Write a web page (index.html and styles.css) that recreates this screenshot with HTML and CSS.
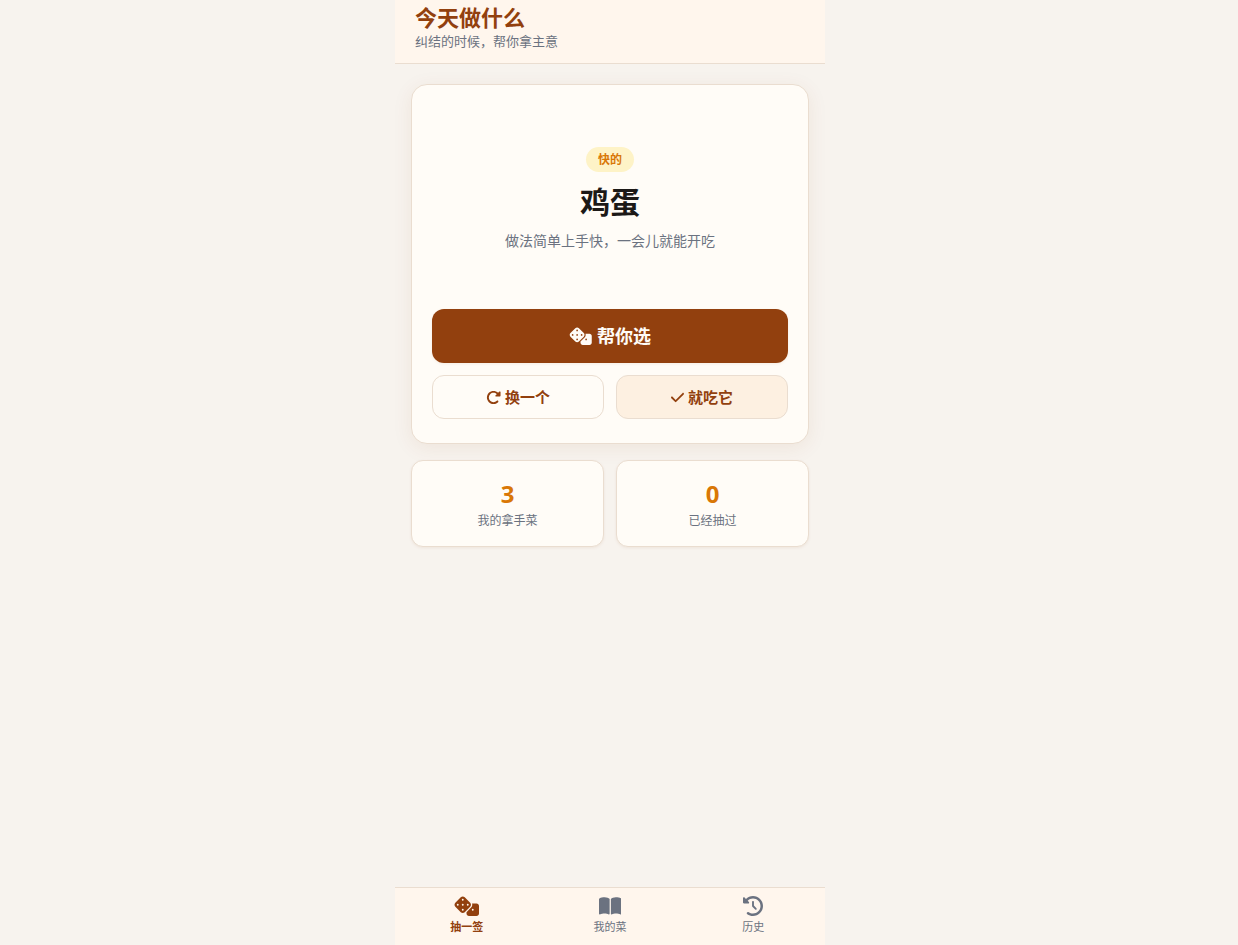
FILE: index.html
```html
<!DOCTYPE html>
<html lang="zh-CN">
<head>
<meta charset="utf-8">
<title>今天做什么</title>
<link rel="stylesheet" href="styles.css">
</head>
<body>
<svg class="sprite" aria-hidden="true">
  <symbol id="dice" viewBox="0 0 640 512"><path d="M274.9 34.3c-28.1-28.1-73.7-28.1-101.8 0L34.3 173.1c-28.1 28.1-28.1 73.7 0 101.8L173.1 413.7c28.1 28.1 73.7 28.1 101.8 0L413.7 274.9c28.1-28.1 28.1-73.7 0-101.8L274.9 34.3zM200 224a24 24 0 1 1 48 0 24 24 0 1 1 -48 0zM96 200a24 24 0 1 1 0 48 24 24 0 1 1 0-48zM224 376a24 24 0 1 1 0-48 24 24 0 1 1 0 48zM352 200a24 24 0 1 1 0 48 24 24 0 1 1 0-48zM224 120a24 24 0 1 1 0-48 24 24 0 1 1 0 48zm96 328c0 35.3 28.7 64 64 64H576c35.3 0 64-28.7 64-64V256c0-35.3-28.7-64-64-64H461.7c11.6 36 3.1 77-25.4 105.5L320 413.8V448zM480 328a24 24 0 1 1 0 48 24 24 0 1 1 0-48z"/></symbol>
  <symbol id="redo" viewBox="0 0 512 512"><path d="M463.5 224H472c13.3 0 24-10.7 24-24V72c0-9.7-5.8-18.5-14.8-22.2s-19.3-1.7-26.2 5.2L413.4 96.6c-87.6-86.5-228.7-86.2-315.8 1c-87.5 87.5-87.5 229.3 0 316.8s229.3 87.5 316.8 0c12.5-12.5 12.5-32.8 0-45.3s-32.8-12.5-45.3 0c-62.5 62.5-163.8 62.5-226.3 0s-62.5-163.8 0-226.3c62.2-62.2 162.7-62.5 225.3-1L327 183c-6.9 6.9-8.9 17.2-5.2 26.2s12.5 14.8 22.2 14.8H463.5z"/></symbol>
  <symbol id="check" viewBox="0 0 448 512"><path d="M438.6 105.4c12.5 12.5 12.5 32.8 0 45.3l-256 256c-12.5 12.5-32.8 12.5-45.3 0l-128-128c-12.5-12.5-12.5-32.8 0-45.3s32.8-12.5 45.3 0L160 338.7 393.4 105.4c12.5-12.5 32.8-12.5 45.3 0z"/></symbol>
  <symbol id="book" viewBox="0 0 576 512"><path d="M249.6 471.5c10.8 3.8 22.4-4.1 22.4-15.5V78.6c0-4.2-1.6-8.4-5-11C247.4 52 202.4 32 144 32C93.5 32 46.3 45.3 18.1 56.1C6.8 60.5 0 71.7 0 83.8V454.1c0 11.9 12.8 20.2 24.1 16.5C55.6 460.1 105.5 448 144 448c33.9 0 79 14 105.6 23.5zm76.8 0C353 462 398.1 448 432 448c38.5 0 88.4 12.1 119.9 22.6c11.3 3.8 24.1-4.6 24.1-16.5V83.8c0-12.1-6.8-23.3-18.1-27.6C529.7 45.3 482.5 32 432 32c-58.4 0-103.4 20-123 35.6c-3.3 2.6-5 6.8-5 11V456c0 11.4 11.7 19.3 22.4 15.5z"/></symbol>
  <symbol id="history" viewBox="0 0 512 512"><path d="M75 75L41 41C25.9 25.9 0 36.6 0 57.9V168c0 13.3 10.7 24 24 24H134.1c21.4 0 32.1-25.9 17-41l-30.8-30.8C155 85.5 203 64 256 64c106 0 192 86 192 192s-86 192-192 192c-40.8 0-78.6-12.7-109.7-34.4c-14.5-10.1-34.4-6.6-44.6 7.9s-6.6 34.4 7.9 44.6C151.2 495 201.7 512 256 512c141.4 0 256-114.6 256-256S397.4 0 256 0C185.3 0 121.3 28.7 75 75zm181 53c-13.3 0-24 10.7-24 24V256c0 6.4 2.5 12.5 7 17l72 72c9.4 9.4 24.6 9.4 33.9 0s9.4-24.6 0-33.9l-65-65V152c0-13.3-10.7-24-24-24z"/></symbol>
</svg>
<div class="app">
  <header class="header">
    <h1 class="title">今天做什么</h1>
    <p class="subtitle">纠结的时候，帮你拿主意</p>
  </header>
  <main class="main">
    <section class="card">
      <div class="result">
        <span class="badge">快的</span>
        <h2 class="dish">鸡蛋</h2>
        <p class="desc">做法简单上手快，一会儿就能开吃</p>
      </div>
      <button class="btn primary"><svg class="icon-dice"><use href="#dice"/></svg><span class="btn-text">帮你选</span></button>
      <div class="row">
        <button class="btn"><svg class="icon-redo"><use href="#redo"/></svg><span class="btn-text">换一个</span></button>
        <button class="btn accept"><svg class="icon-check"><use href="#check"/></svg><span class="btn-text">就吃它</span></button>
      </div>
    </section>
    <div class="row">
      <div class="stat"><div class="num">3</div><div class="label">我的拿手菜</div></div>
      <div class="stat"><div class="num">0</div><div class="label">已经抽过</div></div>
    </div>
  </main>
  <nav class="nav">
    <a class="tab active"><svg class="nav-icon wide"><use href="#dice"/></svg>抽一签</a>
    <a class="tab"><svg class="nav-icon book"><use href="#book"/></svg>我的菜</a>
    <a class="tab"><svg class="nav-icon"><use href="#history"/></svg>历史</a>
  </nav>
</div>
</body>
</html>
```
FILE: styles.css
```css
* { box-sizing: border-box; margin: 0; padding: 0; }
body {
  height: 100vh;
  overflow: hidden;
  padding-right: 18px;
  background: #f7f3ee;
  color: #1c1917;
  font-family: "Noto Sans", "Noto Sans CJK SC", sans-serif;
}
.sprite { display: none; }
svg { fill: currentColor; flex: none; }
.app {
  width: 430px;
  height: 100vh;
  margin: 0 auto;
  display: flex;
  flex-direction: column;
}
.header {
  height: 64px;
  padding: 2px 20px 0;
  background: #fff6ed;
  border-bottom: 1px solid #eaddd0;
}
.title { font-size: 22px; line-height: 30px; font-weight: 700; color: #92400e; }
.subtitle { font-size: 13px; line-height: 18px; color: #6b7280; }
.main {
  flex: 1;
  padding: 20px 16px;
  display: flex;
  flex-direction: column;
  gap: 16px;
}
.card {
  height: 360px;
  padding: 20px 20px 24px;
  display: flex;
  flex-direction: column;
  gap: 12px;
  background: #fffcf7;
  border: 1px solid #eaddd0;
  border-radius: 16px;
  box-shadow: 0 4px 20px rgba(146, 64, 14, 0.08);
}
.result {
  flex: 1;
  padding-top: 42px;
  display: flex;
  flex-direction: column;
  align-items: center;
}
.badge {
  height: 25px;
  padding: 0 12px;
  border-radius: 13px;
  background: #fef3c7;
  color: #d97706;
  font-size: 12px;
  line-height: 25px;
  font-weight: 600;
}
.dish { margin-top: 10px; font-size: 30px; line-height: 40px; font-weight: 700; }
.desc { margin-top: 9px; font-size: 14px; line-height: 20px; color: #6b7280; }
.row { display: flex; gap: 12px; }
.btn {
  flex: 1;
  height: 44px;
  display: flex;
  align-items: center;
  justify-content: center;
  gap: 4px;
  border: 1px solid #eaddd0;
  border-radius: 12px;
  background: #fffcf7;
  color: #92400e;
  font-family: inherit;
  font-size: 15px;
  font-weight: 600;
}
.btn-text { padding-bottom: 2px; }
.primary {
  flex: none;
  height: 54px;
  gap: 5px;
  border: 0;
  background: #92400e;
  color: #fffcf7;
  font-size: 18px;
  font-weight: 700;
  box-shadow: 0 1px 3px rgba(146, 64, 14, 0.08);
}
.accept { background: #fdf0e1; }
.icon-dice { width: 23px; height: 18px; }
.icon-redo { width: 15px; height: 15px; }
.icon-check { width: 13px; height: 15px; }
.stat {
  flex: 1;
  height: 87px;
  padding-top: 16px;
  text-align: center;
  background: #fffcf7;
  border: 1px solid #eaddd0;
  border-radius: 12px;
  box-shadow: 0 1px 3px rgba(146, 64, 14, 0.08);
}
.num { font-size: 24px; line-height: 34px; font-weight: 700; color: #d97706; }
.label { margin-top: 1px; font-size: 12px; line-height: 17px; color: #6b7280; }
.nav {
  height: 58px;
  display: flex;
  background: #fff6ed;
  border-top: 1px solid #eaddd0;
}
.tab {
  flex: 1;
  padding-top: 8px;
  display: flex;
  flex-direction: column;
  align-items: center;
  gap: 3px;
  font-size: 11px;
  line-height: 16px;
  color: #6b7280;
}
.active { color: #92400e; font-weight: 600; }
.nav-icon { width: 20px; height: 20px; }
.wide { width: 25px; }
.book { width: 22.5px; }
```
